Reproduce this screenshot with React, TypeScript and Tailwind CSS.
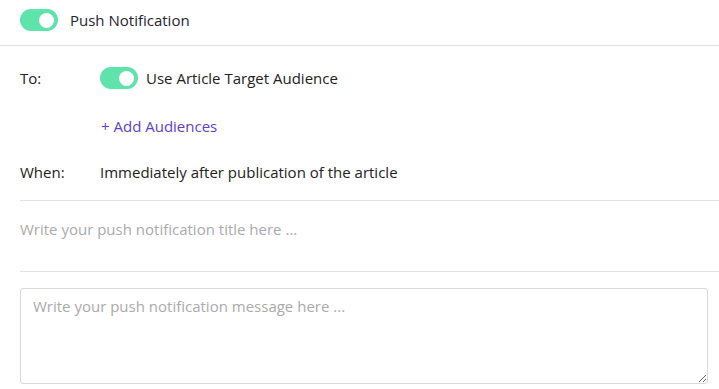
function Toggle() {
  return (
    <span className="flex h-[22px] w-[38px] shrink-0 items-center justify-end rounded-full bg-[#5ee3ab] pr-[4px]">
      <span className="h-[15px] w-[15px] rounded-full bg-white" />
    </span>
  );
}

export default function App() {
  return (
    <div className="h-[389px] w-[719px] overflow-hidden bg-white font-['Open_Sans',sans-serif] text-[15px] text-[#222]">
      <div className="flex h-[46px] items-center gap-3 border-b border-[#e3e3e3] pl-5 pb-[5px]">
        <Toggle />
        <span className="text-[#1e2430]">Push Notification</span>
      </div>

      <div className="pl-5">
        <div className="flex h-[64px] items-center">
          <span className="w-20">To:</span>
          <Toggle />
          <span className="ml-2">Use Article Target Audience</span>
        </div>
        <div className="flex h-[32px] items-center pl-[81px] text-[#5b3fd1]">+ Add Audiences</div>
        <div className="flex h-[58px] items-center pt-[2px]">
          <span className="w-20">When:</span>
          <span>Immediately after publication of the article</span>
        </div>
        <div className="border-t border-[#e3e3e3]">
          <input
            className="h-[70px] w-full pb-[14px] text-[15px] outline-none placeholder:text-[#aaa]"
            placeholder="Write your push notification title here ..."
          />
        </div>
        <div className="border-t border-[#e3e3e3] pt-4 pr-[11px]">
          <textarea
            className="block h-[96px] w-full rounded-[3px] border border-[#d9d9d9] px-3 py-[6px] text-[15px] outline-none placeholder:text-[#aaa]"
            placeholder="Write your push notification message here ..."
          />
        </div>
      </div>
    </div>
  );
}
